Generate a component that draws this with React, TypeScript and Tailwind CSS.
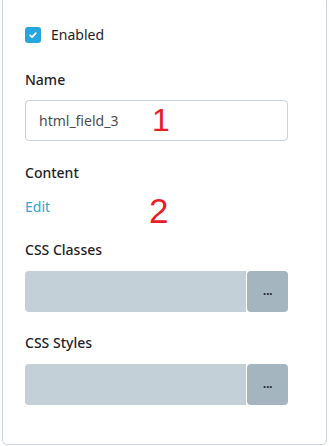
import React from 'react';

const font = { fontFamily: '"Noto Sans", "Open Sans", sans-serif' };

const ButtonInput: React.FC = () => (
  <div className="flex h-[41px] w-[263px]">
    <div className="flex-1 rounded-l-[4px] bg-[#c3d0d7]" />
    <button className="ml-px flex w-[41px] items-center justify-center rounded-[4px] bg-[#a5b5bf] text-[13px] font-semibold leading-none text-[#1b2733]">
      <span className="-mt-[3px] tracking-[-0.5px]">...</span>
    </button>
  </div>
);

const App: React.FC = () => {
  return (
    <div className="h-[446px] w-[329px] overflow-hidden bg-white text-[14px] text-[#1f2328]" style={font}>
      <div className="relative -mt-[3px] ml-[2px] w-[325px] rounded-[5px] border border-[#c9d4db] pb-[39px] pl-[22px] pt-[29px]">
        {/* Enabled */}
        <label className="flex h-[16px] items-center gap-[10px]">
          <span className="flex h-[16px] w-[16px] items-center justify-center rounded-[3px] bg-[#27a6dd]">
            <svg viewBox="0 0 16 16" className="h-[10px] w-[10px]" fill="none" stroke="white" strokeWidth="2.8" strokeLinecap="round" strokeLinejoin="round">
              <path d="M3.5 8.5l3 2.8L12.5 5" />
            </svg>
          </span>
          <span className="leading-[20px]">Enabled</span>
        </label>

        {/* Name */}
        <div className="mt-[27px] font-medium leading-[20px]">Name</div>
        <div className="mt-[10px] flex h-[41px] w-[263px] items-center rounded-[4px] border border-[#c7d2d9] px-[13px] text-[#4a4f55]">
          html_field_3
        </div>

        {/* Content */}
        <div className="mt-[22px] font-medium leading-[20px]">Content</div>
        <div className="mt-[14px] leading-[20px] text-[#36a3d9]">Edit</div>

        {/* CSS Classes */}
        <div className="mt-[23px] font-medium leading-[20px]">CSS Classes</div>
        <div className="mt-[11px]">
          <ButtonInput />
        </div>

        {/* CSS Styles */}
        <div className="mt-[21px] font-medium leading-[20px]">CSS Styles</div>
        <div className="mt-[11px]">
          <ButtonInput />
        </div>

        {/* annotation numerals */}
        <span
          className="absolute left-[149px] top-[102px] text-[32px] leading-[40px] text-[#ea1c25]"
          style={{ fontFamily: '"Liberation Sans", sans-serif' }}
        >
          1
        </span>
        <span
          className="absolute left-[146px] top-[193px] text-[35px] leading-[40px] text-[#ea1c25]"
          style={{ fontFamily: '"Liberation Sans", sans-serif' }}
        >
          2
        </span>
      </div>
    </div>
  );
};

export default App;
